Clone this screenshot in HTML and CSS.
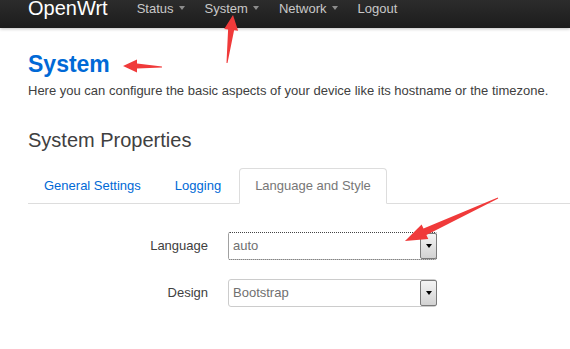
FILE: index.html
```html
<!DOCTYPE html>
<html>

<head>
    <title>OpenWrt - System</title>
    <link rel="stylesheet" href="styles.css">
</head>

<body>

    <!-- Top bar -->
    <div class="topbar">
        <a class="brand" href="#">OpenWrt</a>
        <ul class="nav">
            <li><a href="#">Status<span class="caret"></span></a></li>
            <li><a href="#">System<span class="caret"></span></a></li>
            <li><a href="#">Network<span class="caret"></span></a></li>
            <li><a href="#">Logout</a></li>
        </ul>
    </div>

    <div class="container">
        <h2 class="page-title">System</h2>
        <p class="page-desc">Here you can configure the basic aspects of your device like its hostname or the timezone.</p>

        <h3 class="section-title">System Properties</h3>

        <ul class="tabs">
            <li><a href="#">General Settings</a></li>
            <li><a href="#">Logging</a></li>
            <li class="active"><a href="#">Language and Style</a></li>
        </ul>

        <div class="form">
            <label class="field-label">Language</label>
            <div class="select focused">
                <span class="select-value">auto</span>
                <span class="select-btn"><span class="select-arrow"></span></span>
            </div>

            <label class="field-label">Design</label>
            <div class="select">
                <span class="select-value">Bootstrap</span>
                <span class="select-btn"><span class="select-arrow"></span></span>
            </div>
        </div>
    </div>

    <!-- Red arrows drawn over the screenshot -->
    <svg class="annotations" width="570" height="349" viewBox="0 0 570 349">
        <polygon points="233,15 238.1,30.8 234.1,30.3 227.5,63.1 226.5,62.9 228.1,29.5 224.2,29" />
        <polygon points="123,66 137,72.5 137,68.5 162,67.5 162,66.5 137,63.5 137,59.5" />
        <polygon points="405,241 428.3,239 426.4,234.9 498.2,198.5 497.8,197.5 423.5,228.6 421.6,224.5" />
    </svg>

</body>

</html>
```

FILE: styles.css
```css
/* Base */
body {
    margin: 0;
    background-color: #ffffff;
    font-family: "Liberation Sans", Arial, sans-serif;
    font-size: 13px;
    line-height: 18px;
    color: #404040;
}

a {
    text-decoration: none;
}

ul {
    list-style: none;
    margin: 0;
    padding: 0;
}

/* Top bar */
.topbar {
    display: flex;
    align-items: flex-start;
    height: 28px;
    overflow: hidden;
    padding-left: 28px;
    background: linear-gradient(#2c2c2c, #1c1c1c);
    box-shadow: 0 1px 3px rgba(0, 0, 0, 0.25);
}

.brand {
    color: #ffffff;
    font-size: 20px;
    line-height: 20px;
    margin-top: -2px;
    padding-right: 19px;
}

.nav {
    display: flex;
}

.nav a {
    display: block;
    padding: 0 10px;
    margin-top: 2px;
    font-size: 13px;
    line-height: 13px;
    color: #c8c8c8;
}

.caret {
    display: inline-block;
    margin-left: 5px;
    vertical-align: 3px;
    border-top: 4px solid #8c8c8c;
    border-left: 3.5px solid transparent;
    border-right: 3.5px solid transparent;
}

/* Content */
.container {
    padding-left: 28px;
}

.page-title {
    margin: 21px 0 0;
    font-size: 23px;
    line-height: 30px;
    font-weight: bold;
    color: #0069d6;
}

.page-desc {
    margin: 3px 0 0;
    white-space: nowrap;
}

.section-title {
    margin: 28px 0 0;
    font-size: 20px;
    line-height: 24px;
    font-weight: normal;
    color: #404040;
}

/* Tabs */
.tabs {
    display: flex;
    margin-top: 16px;
    border-bottom: 1px solid #dddddd;
}

.tabs li {
    margin-bottom: -1px;
}

.tabs a {
    display: block;
    margin-right: 2px;
    padding: 0 15px;
    line-height: 34px;
    border: 1px solid transparent;
    border-radius: 4px 4px 0 0;
    color: #0069d6;
}

.tabs .active a {
    color: #777777;
    background-color: #ffffff;
    border-color: #dddddd;
    border-bottom-color: transparent;
}

/* Form */
.form {
    display: grid;
    grid-template-columns: 180px 209px;
    column-gap: 20px;
    row-gap: 19px;
    align-items: center;
    margin-top: 28px;
}

.field-label {
    text-align: right;
    color: #404040;
}

.select {
    display: flex;
    height: 28px;
    box-sizing: border-box;
    border: 1px solid #cccccc;
    border-radius: 3px;
    background-color: #ffffff;
}

.select.focused {
    border: 1px dotted #444444;
    border-radius: 2px;
}

.select-value {
    flex: 1;
    padding-left: 4px;
    line-height: 26px;
    color: #707070;
}

.select-btn {
    display: flex;
    align-items: center;
    justify-content: center;
    width: 15px;
    margin: 0 -1px 0 0;
    border: 1px solid #7a7a7a;
    border-radius: 2px;
    background: linear-gradient(#f4f4f4, #d2d2d2);
}

.select-arrow {
    border-top: 4px solid #000000;
    border-left: 3.5px solid transparent;
    border-right: 3.5px solid transparent;
}

/* Annotations */
.annotations {
    position: absolute;
    left: 0;
    top: 0;
    pointer-events: none;
    fill: #f03a3a;
}
```
